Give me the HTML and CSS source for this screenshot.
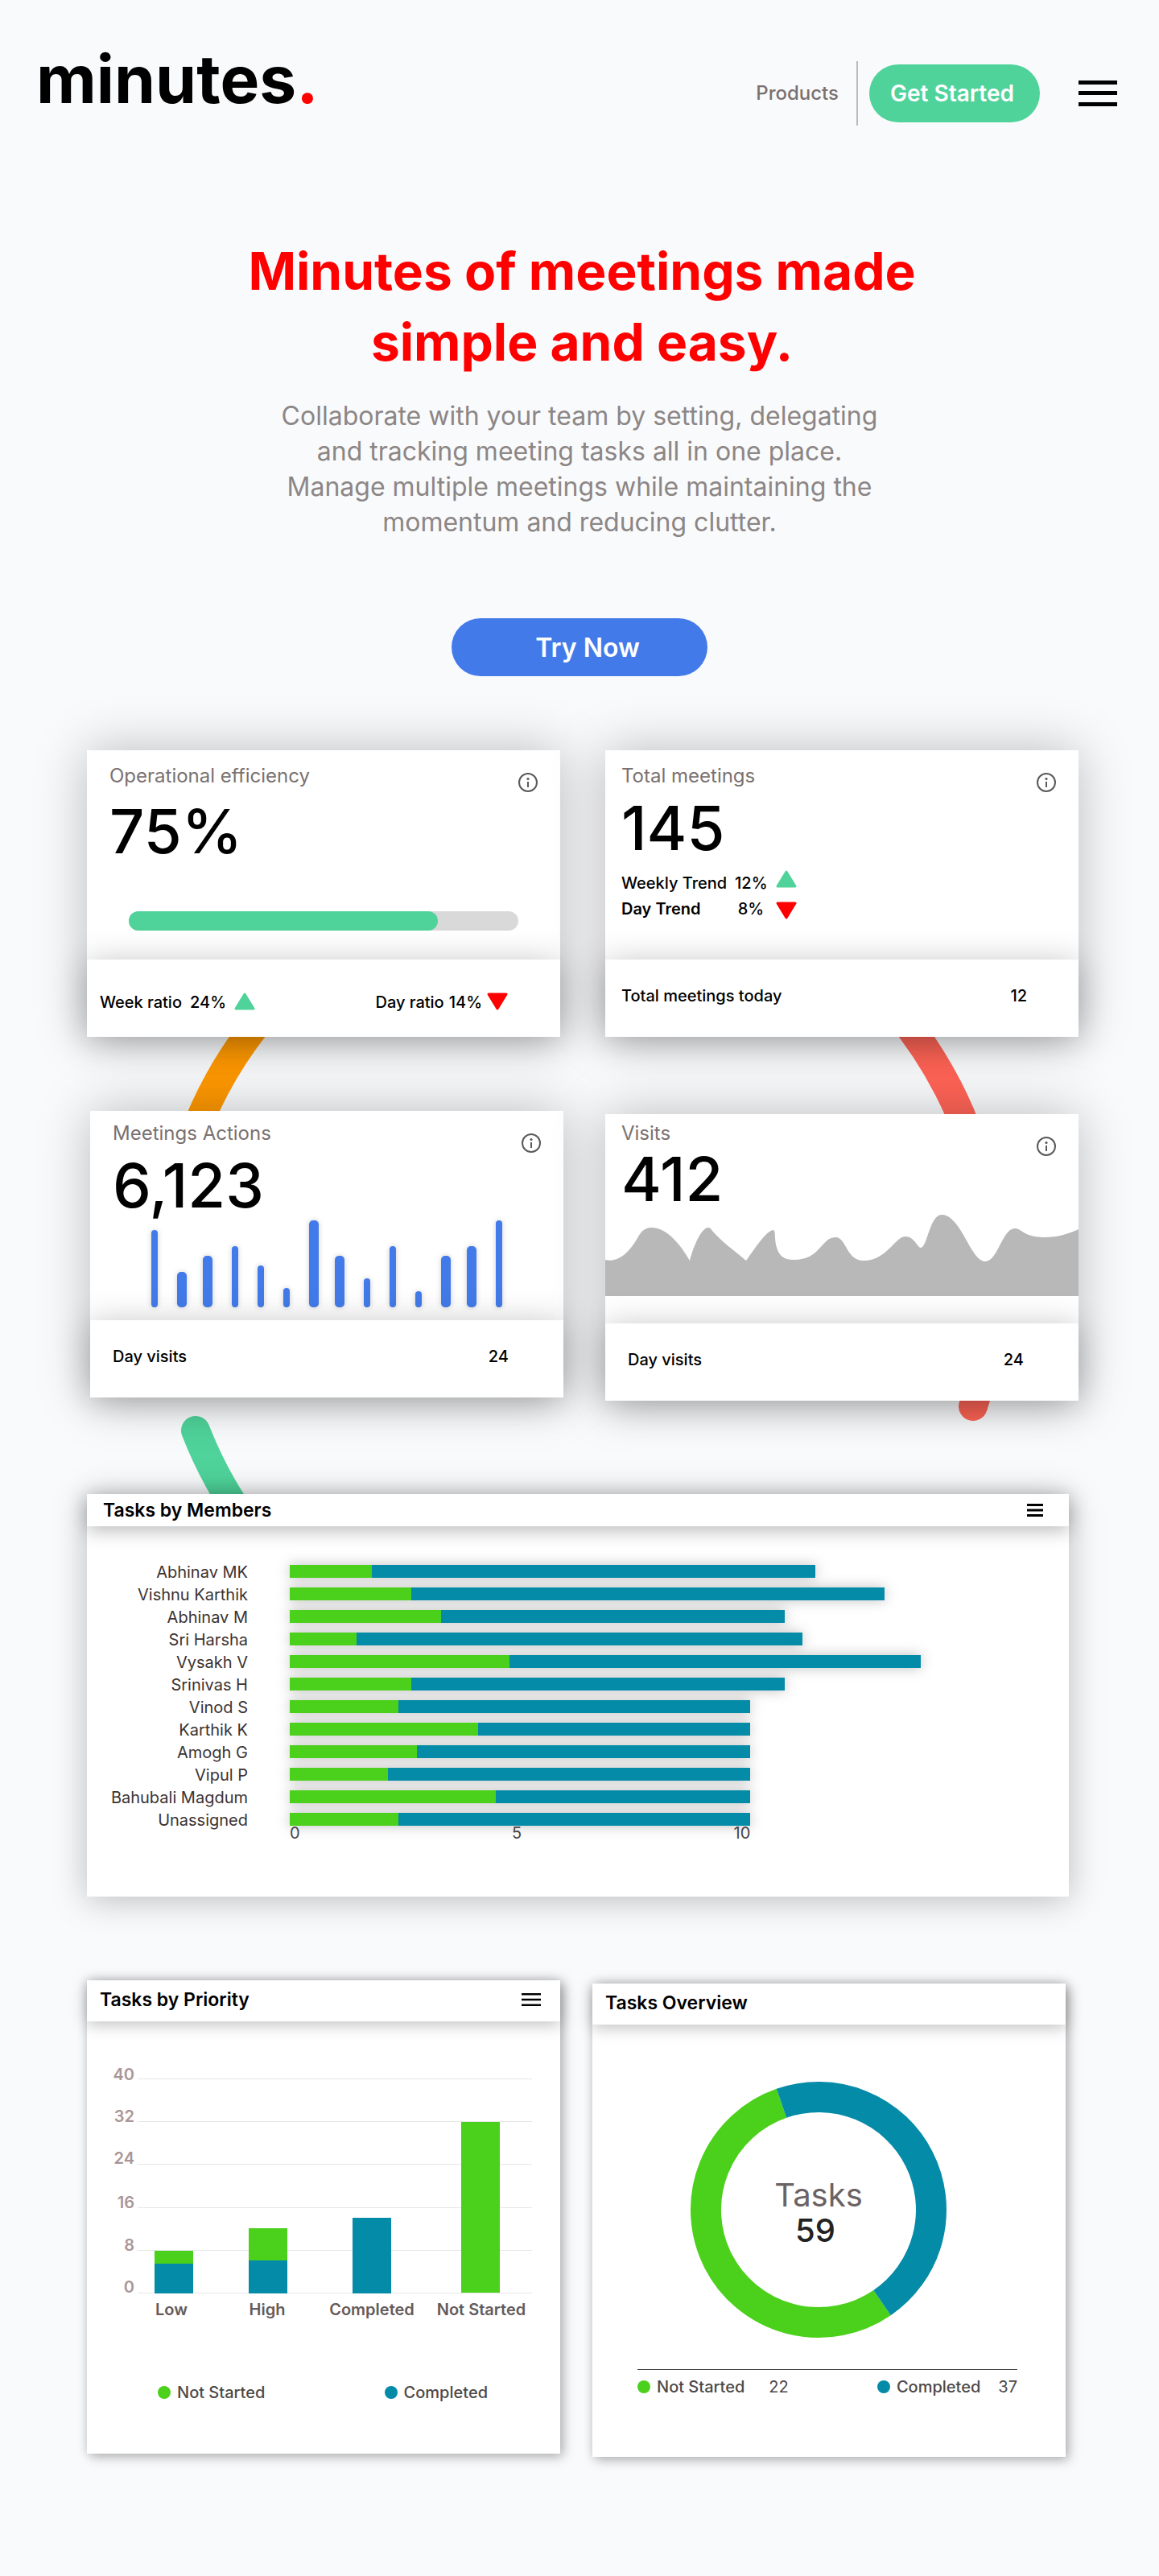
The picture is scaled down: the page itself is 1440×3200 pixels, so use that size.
FILE: index.html
```html
<!DOCTYPE html>
<html lang="en">
<head>
<meta charset="utf-8">
<meta name="viewport" content="width=device-width, initial-scale=1">
<title>minutes.</title>
<link rel="stylesheet" href="styles.css">
</head>
<body>
<svg class="sprite" aria-hidden="true">
  <symbol id="info" viewBox="0 0 24 24"><circle cx="12" cy="12" r="11" fill="none" stroke="#5a5a5a" stroke-width="2"/><circle cx="12" cy="7.5" r="1.6" fill="#5a5a5a"/><path d="M12 11v7" stroke="#5a5a5a" stroke-width="2"/></symbol>
  <symbol id="up" viewBox="0 0 26 22"><path d="M13 2 24 20H2Z" fill="#4fd39a" stroke="#4fd39a" stroke-width="3" stroke-linejoin="round"/></symbol>
  <symbol id="down" viewBox="0 0 26 22"><path d="M13 20 24 2H2Z" fill="#f00" stroke="#f00" stroke-width="3" stroke-linejoin="round"/></symbol>
</svg>

<header class="site-header">
  <a class="logo" href="#">minutes<span class="logo-dot">.</span></a>
  <nav class="nav">
    <a class="nav-link" href="#">Products</a>
    <button class="btn btn-start" type="button">Get Started</button>
    <button class="menu" type="button" aria-label="Menu"><svg width="48" height="32" viewBox="0 0 48 32"><path d="M0 0h48v5H0zM0 13h48v5H0zM0 27h48v5H0z"/></svg></button>
  </nav>
</header>

<main>
  <section class="hero">
    <h1 class="hero-title">Minutes of meetings made<br>simple and easy.</h1>
    <p class="hero-text">Collaborate with your team by setting, delegating<br>and tracking meeting tasks all in one place.<br>Manage multiple meetings while maintaining the<br>momentum and reducing clutter.</p>
    <button class="btn btn-try" type="button">Try Now</button>
  </section>

  <section class="dashboard">
    <svg class="ring" width="1440" height="1000" viewBox="0 0 1440 1000" fill="none" stroke-width="36" stroke-linecap="round" aria-hidden="true">
      <path d="M344 311A514 514 0 0 0 240 480" stroke="#ff9900"/>
      <path d="M1103 311A514 514 0 0 1 1209 815" stroke="#ff6456"/>
      <path d="M243 845A514 514 0 0 0 310 966" stroke="#4fd39a"/>
    </svg>

    <div class="row row-first">
      <article class="card stat">
        <div class="stat-body">
          <div class="stat-top">
            <div class="figures figures-efficiency"><h2 class="stat-label">Operational efficiency</h2><p class="stat-value">75%</p></div>
            <svg class="info" role="img" aria-label="Information"><use href="#info"/></svg>
          </div>
          <div class="progress" role="progressbar" aria-label="Operational efficiency" aria-valuenow="75" aria-valuemin="0" aria-valuemax="100"><div class="progress-fill"></div></div>
        </div>
        <footer class="stat-foot foot-ratios">
          <p class="ratio ratio-week"><span>Week ratio</span><span>24%</span><svg class="tri"><use href="#up"/></svg></p>
          <p class="ratio ratio-day"><span>Day ratio</span><span>14%</span><svg class="tri"><use href="#down"/></svg></p>
        </footer>
      </article>

      <article class="card stat">
        <div class="stat-body">
          <div class="stat-top">
            <div class="figures figures-total"><h2 class="stat-label">Total meetings</h2><p class="stat-value">145</p>
              <div class="trends">
                <span>Weekly Trend</span><span class="trend-pct">12%</span><svg class="tri"><use href="#up"/></svg>
                <span class="strong">Day Trend</span><span class="trend-pct">8%</span><svg class="tri tri-down"><use href="#down"/></svg>
              </div>
            </div>
            <svg class="info" role="img" aria-label="Information"><use href="#info"/></svg>
          </div>
        </div>
        <footer class="stat-foot foot-total"><span>Total meetings today</span><span>12</span></footer>
      </article>
    </div>

    <div class="row row-second">
      <article class="card stat">
        <div class="stat-body">
          <div class="stat-top">
            <div class="figures figures-actions"><h2 class="stat-label">Meetings Actions</h2><p class="stat-value">6,123</p></div>
            <svg class="info" role="img" aria-label="Information"><use href="#info"/></svg>
          </div>
          <svg class="bars" viewBox="0 0 588 108" fill="#427be9" role="img" aria-label="Meeting actions over time">
            <rect x="76" y="12" width="8" height="96" rx="4"/><rect x="108" y="64" width="12" height="44" rx="5"/><rect x="140" y="44" width="12" height="64" rx="5"/><rect x="176" y="32" width="8" height="76" rx="4"/><rect x="208" y="56" width="8" height="52" rx="4"/><rect x="240" y="84" width="8" height="24" rx="4"/><rect x="272" y="0" width="12" height="108" rx="5"/><rect x="304" y="44" width="12" height="64" rx="5"/><rect x="340" y="72" width="8" height="36" rx="4"/><rect x="372" y="32" width="8" height="76" rx="4"/><rect x="404" y="88" width="8" height="20" rx="4"/><rect x="436" y="44" width="12" height="64" rx="5"/><rect x="468" y="32" width="12" height="76" rx="5"/><rect x="504" y="0" width="8" height="108" rx="4"/>
          </svg>
        </div>
        <footer class="stat-foot foot-visits"><span>Day visits</span><span>24</span></footer>
      </article>

      <article class="card stat stat-visits">
        <div class="stat-body">
          <div class="stat-top">
            <div class="figures figures-visits"><h2 class="stat-label">Visits</h2><p class="stat-value">412</p></div>
            <svg class="info" role="img" aria-label="Information"><use href="#info"/></svg>
          </div>
          <svg class="wave" viewBox="0 0 588 101" preserveAspectRatio="none" role="img" aria-label="Visits over time"><path fill="#b8b8b8" d="M0 56C17 60 31 45 40 29C46 18 51 16 58 16C77 16 94 38 105 57C109 41 119 16 128 16C130 16 131 17 133 20C145 34 160 44 175 57C184 45 198 22 208 19C212 19 210 25 212 37C215 51 222 56 234 56C268 56 268 28 286 28C300 28 299 57 321 57C350 57 360 27 373 27C384 27 388 41 392 41C400 41 403 0 418 0C442 0 454 58 472 58C488 58 493 17 509 17C518 17 519 28 546 28C562 28 575 24 588 18V101H0Z"/></svg>
        </div>
        <footer class="stat-foot foot-visits"><span>Day visits</span><span>24</span></footer>
      </article>
    </div>

    <article class="card members">
      <header class="members-head"><h2 class="card-title">Tasks by Members</h2>
        <button class="menu" type="button" aria-label="Tasks by Members menu"><svg width="20" height="16" viewBox="0 0 20 16"><path d="M0 0h20v3H0zM0 6.500h20v3H0zM0 13h20v3H0z"/></svg></button></header>
      <div class="members-chart">
        <ul class="names"><li>Abhinav MK</li><li>Vishnu Karthik</li><li>Abhinav M</li><li>Sri Harsha</li><li>Vysakh V</li><li>Srinivas H</li><li>Vinod S</li><li>Karthik K</li><li>Amogh G</li><li>Vipul P</li><li>Bahubali Magdum</li><li>Unassigned</li></ul>
        <div class="plot">
          <div class="tracks">
            <div class="track"><i class="todo" style="width:13%"></i><i class="done" style="width:70.3%"></i></div>
            <div class="track"><i class="todo" style="width:19.3%"></i><i class="done" style="width:74.9%"></i></div>
            <div class="track"><i class="todo" style="width:24%"></i><i class="done" style="width:54.5%"></i></div>
            <div class="track"><i class="todo" style="width:10.6%"></i><i class="done" style="width:70.7%"></i></div>
            <div class="track"><i class="todo" style="width:34.8%"></i><i class="done" style="width:65.2%"></i></div>
            <div class="track"><i class="todo" style="width:19.3%"></i><i class="done" style="width:59.2%"></i></div>
            <div class="track"><i class="todo" style="width:17.2%"></i><i class="done" style="width:55.8%"></i></div>
            <div class="track"><i class="todo" style="width:29.8%"></i><i class="done" style="width:43.2%"></i></div>
            <div class="track"><i class="todo" style="width:20.2%"></i><i class="done" style="width:52.8%"></i></div>
            <div class="track"><i class="todo" style="width:15.6%"></i><i class="done" style="width:57.4%"></i></div>
            <div class="track"><i class="todo" style="width:32.7%"></i><i class="done" style="width:40.3%"></i></div>
            <div class="track"><i class="todo" style="width:17.2%"></i><i class="done" style="width:55.8%"></i></div>
          </div>
          <div class="axis"><span>0</span><span>5</span><span>10</span></div>
        </div>
      </div>
    </article>

    <div class="row row-tasks">
      <article class="card tasks">
        <header class="tasks-head"><h2 class="card-title">Tasks by Priority</h2>
          <button class="menu" type="button" aria-label="Tasks by Priority menu"><svg width="24" height="16" viewBox="0 0 24 16"><path d="M0 0h24v2.500H0zM0 6.700h24v2.500H0zM0 13.500h24V16H0z"/></svg></button></header>
        <svg class="priority-chart" viewBox="0 0 588 320" role="img" aria-label="Tasks by priority">
          <path d="M63 14.500H553M63 67.500H553M63 120.500H553M63 174.500H553M63 227.500H553M63 280.500H553" stroke="#e6e6e6"/>
          <g class="y-labels" text-anchor="end"><text x="59" y="16">40</text><text x="59" y="68">32</text><text x="59" y="120">24</text><text x="59" y="175">16</text><text x="59" y="228">8</text><text x="59" y="280">0</text></g>
          <g fill="#4bd01b"><path d="M84 228h48v16H84zM201 200h48v40h-48zM465 68h48v212h-48z"/></g>
          <g fill="#048ba8"><path d="M84 244h48v37H84zM201 240h48v41h-48zM330 187h48v94h-48z"/></g>
          <g class="x-labels" text-anchor="middle"><text x="105" y="308">Low</text><text x="224" y="308">High</text><text x="354" y="308">Completed</text><text x="490" y="308">Not Started</text></g>
        </svg>
        <ul class="legend legend-priority"><li><i class="dot todo"></i>Not Started</li><li><i class="dot done"></i>Completed</li></ul>
      </article>

      <article class="card tasks tasks-overview">
        <header class="tasks-head"><h2 class="card-title">Tasks Overview</h2></header>
        <svg class="donut" width="320" height="320" viewBox="-160 -160 320 320" role="img" aria-label="Tasks 59">
          <g fill="none" stroke-width="38"><path d="M79 115.600A140 140 0 1 1 -46 -132.200" stroke="#4bd01b"/><path d="M-46 -132.200A140 140 0 0 1 79 115.600" stroke="#048ba8"/></g>
          <text class="donut-label" y="-4" text-anchor="middle">Tasks</text><text class="donut-value" x="-4" y="40" text-anchor="middle">59</text>
        </svg>
        <ul class="legend legend-overview"><li><i class="dot todo"></i>Not Started<span class="count count-todo">22</span></li><li><i class="dot done"></i>Completed<span class="count">37</span></li></ul>
      </article>
    </div>
  </section>
</main>
</body>
</html>
```
FILE: styles.css
```css
* { box-sizing: border-box; }
body { margin: 0; background: #f9fafc; color: #000; font-family: Inter, "Noto Sans", sans-serif; font-size: 20px; font-weight: 500; }
h1, h2, p, ul { margin: 0; padding: 0; list-style: none; }
a { color: inherit; text-decoration: none; }
button { border: 0; padding: 0; background: none; color: inherit; font: inherit; cursor: pointer; }
svg { display: block; flex: none; }
.sprite { position: absolute; width: 0; height: 0; }

/* Header */
.site-header { display: flex; justify-content: space-between; align-items: flex-start; padding: 59px 52px 0 45px; }
.logo { font-size: 82px; line-height: 80px; font-weight: 700; }
.logo-dot { color: #f00; }
.nav { display: flex; align-items: center; margin-top: 17px; }
.nav-link { height: 80px; padding-right: 22px; border-right: 2px solid #bbb; color: #7a7170; font-size: 24px; line-height: 80px; }
.btn { height: 72px; border-radius: 36px; color: #fff; }
.btn-start { width: 212px; margin: 0 48px 0 14px; padding-right: 6px; background: #4fd39a; font-size: 28px; font-weight: 600; }

/* Hero */
.hero { display: flex; flex-direction: column; align-items: center; margin-top: 137px; text-align: center; }
.hero-title { padding-left: 6px; color: #f00; font-size: 64px; line-height: 88px; font-weight: 700; }
.hero-text { margin-top: 26px; color: #8c8685; font-size: 32px; line-height: 44px; font-weight: 400; }
.btn-try { width: 318px; margin-top: 97px; padding-left: 20px; background: #427be9; font-size: 32px; font-weight: 600; }

/* Dashboard */
.dashboard { position: relative; z-index: 0; margin-top: 92px; padding: 0 100px 148px 108px; }
.ring { position: absolute; z-index: -1; top: 0; left: 50%; transform: translateX(-50%); }
.row { display: grid; grid-template-columns: 1fr 1fr; align-items: start; }
.row-first { column-gap: 56px; }
.row-second { column-gap: 52px; margin-top: 92px; padding-left: 4px; }
.row-tasks { column-gap: 40px; margin-top: 104px; padding-right: 16px; }
.card { background: #fff; }

/* Stat cards */
.stat { box-shadow: 0 0 60px rgba(0, 0, 0, .25); }
.stat-visits { margin-top: 4px; }
.stat-body { display: flex; flex-direction: column; justify-content: space-between; min-height: 260px; }
.stat-top { display: flex; justify-content: space-between; }
.figures { display: flex; flex-direction: column; }
.figures-efficiency { gap: 12px; padding: 16px 0 0 28px; }
.figures-total { gap: 8px; padding: 16px 0 0 20px; }
.figures-actions { gap: 8px; padding: 12px 0 0 28px; }
.figures-visits { padding: 8px 0 0 20px; }
.stat-label { color: #7a7170; font-size: 24px; line-height: 32px; font-weight: 400; }
.stat-value { font-size: 76px; line-height: 80px; }
.info { width: 24px; height: 24px; margin: 28px 28px 0 0; }
.tri { width: 26px; height: 22px; }
.progress { height: 24px; margin: 0 52px 36px; border-radius: 12px; background: #d9d9d9; }
.progress-fill { width: 79.3%; height: 100%; border-radius: 12px; background: #4fd39a; }
.trends { display: grid; grid-template-columns: 136px 46px 26px; column-gap: 5px; margin-top: 5px; line-height: 32px; }
.trend-pct { margin-right: 6px; text-align: center; }
.tri-down { margin-top: 7px; }
.strong { font-weight: 600; }
.bars { width: 100%; margin-bottom: 16px; overflow: visible; filter: drop-shadow(0 0 3px rgba(0, 0, 0, .2)); }
.wave { width: 100%; height: 101px; margin-bottom: 34px; }
.stat-foot { position: relative; display: flex; justify-content: space-between; height: 96px; background: #fff; box-shadow: 0 4px 40px rgba(0, 0, 0, .25); line-height: 24px; }
.foot-ratios { padding: 41px 65px 0 16px; }
.ratio { display: flex; align-items: flex-start; }
.ratio-week { gap: 10px; }
.ratio-day { gap: 6px; }
.foot-total { padding: 33px 64px 0 20px; }
.foot-visits { padding: 33px 68px 0 28px; }

/* Tasks by members */
.members { margin: 116px 12px 0 0; box-shadow: 0 4px 40px rgba(0, 0, 0, .25); }
.card-title { font-size: 23px; line-height: 32px; font-weight: 600; }
.members-head { position: relative; display: flex; justify-content: space-between; align-items: center; height: 40px; padding: 0 32px 0 20px; background: #fff; box-shadow: 0 4px 24px rgba(0, 0, 0, .3); }
.members-chart { display: flex; gap: 52px; padding: 43px 184px 70px 0; }
.names { width: 200px; color: #3b3333; line-height: 28px; font-weight: 400; text-align: right; }
.plot { flex: 1; padding-top: 5px; }
.tracks { display: grid; row-gap: 12px; filter: drop-shadow(0 0 8px rgba(0, 0, 0, .25)); }
.track { display: flex; height: 16px; }
.todo { background: #4bd01b; }
.done { background: #048ba8; }
.axis { position: relative; display: flex; justify-content: space-between; width: 73%; color: #444; line-height: 18px; font-weight: 400; }

/* Priority and overview */
.tasks { min-height: 588px; box-shadow: 4px 4px 14px rgba(0, 0, 0, .25), 0 0 12px rgba(0, 0, 0, .12); }
.tasks-overview { margin-top: 4px; }
.tasks-head { display: flex; justify-content: space-between; align-items: center; height: 51px; padding: 0 24px 4px 16px; background: #fff; box-shadow: 0 4px 20px rgba(0, 0, 0, .25); }
.priority-chart { width: 100%; margin-top: 57px; overflow: visible; }
.y-labels { fill: #aa9696; font-weight: 600; }
.x-labels { fill: #655b5b; font-weight: 600; }
.legend { display: flex; justify-content: space-between; color: #4d4848; line-height: 24px; }
.legend li { display: flex; align-items: center; }
.dot { width: 16px; height: 16px; margin-right: 8px; border-radius: 50%; }
.legend-priority { padding: 72px 90px 0 88px; }
.donut { margin: 70px auto 0 121px; }
.donut-label { fill: #6b6363; font-size: 40px; font-weight: 400; }
.donut-value { fill: #222; font-size: 40px; }
.legend-overview { margin: 38px 60px 0 56px; padding-top: 9px; border-top: 1px solid #444; }
.count { margin-left: 22px; font-weight: 400; }
.count-todo { margin-left: 30px; }
```
